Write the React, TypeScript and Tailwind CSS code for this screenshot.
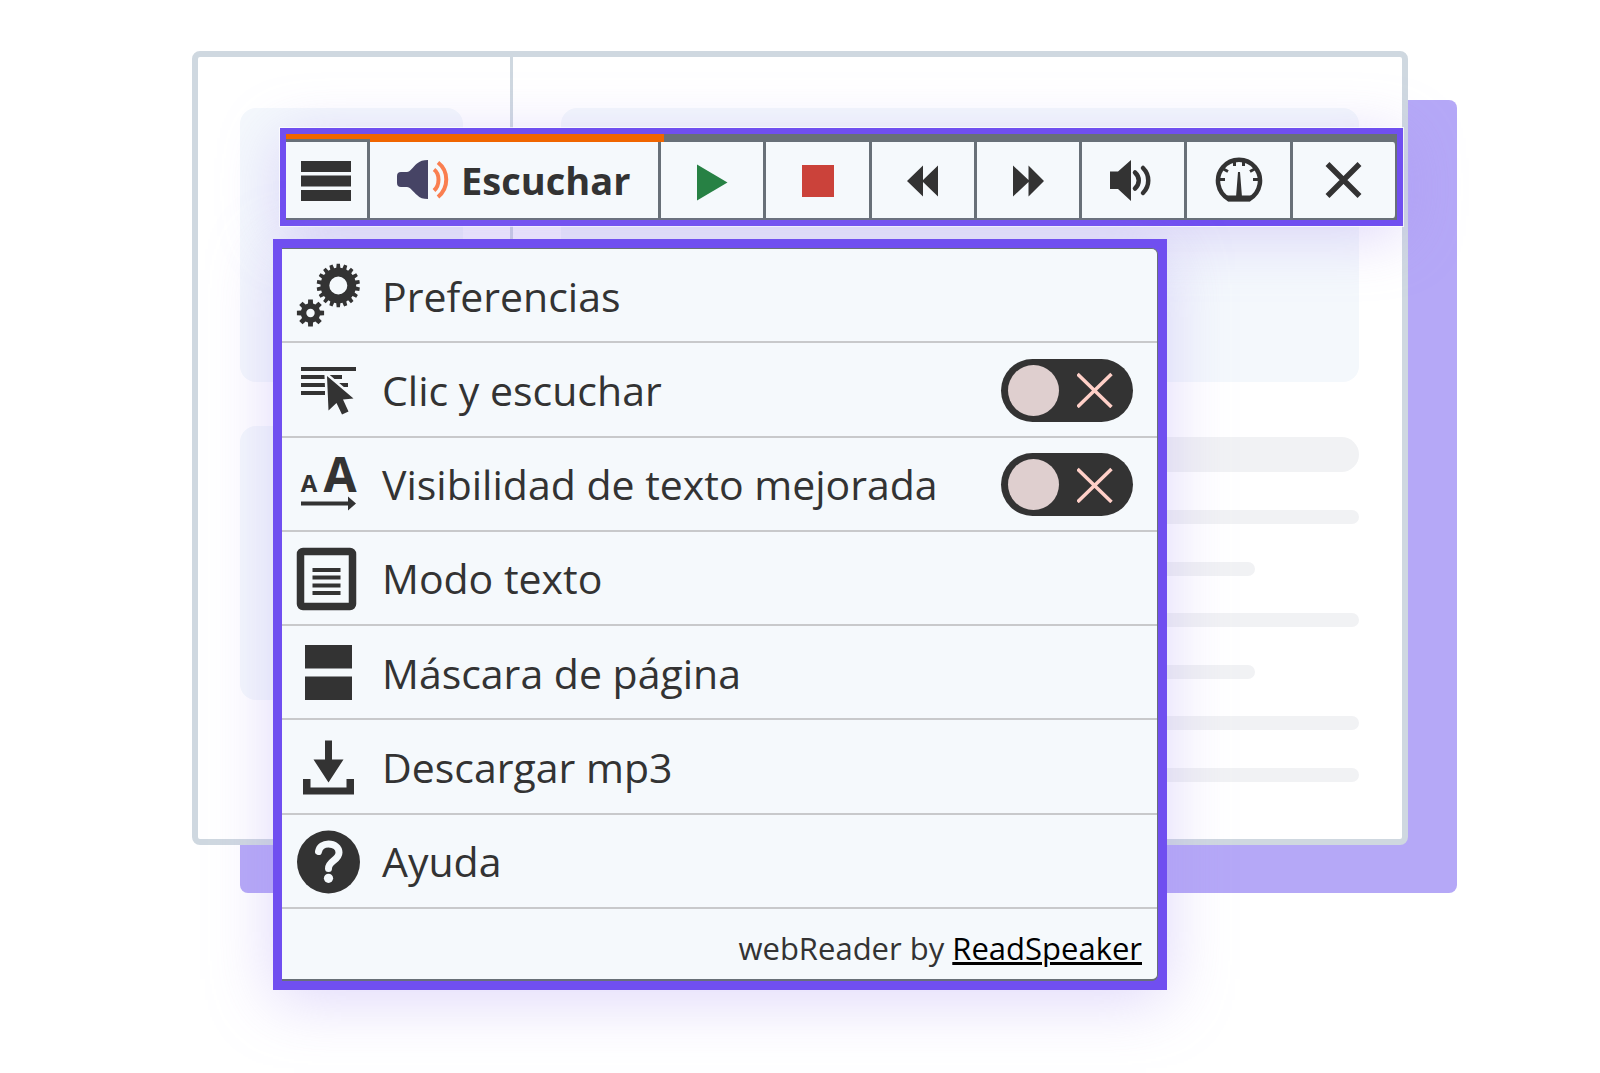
// =====================================
// App.tsx
// webReader: toolbar + tools menu over a page mockup
// =====================================

import { useState } from "react";
import type { ReactNode } from "react";

// Outline of a cog with `teeth` square teeth
function gearPath(
  cx: number,
  cy: number,
  outer: number,
  root: number,
  hole: number,
  teeth: number
) {
  const step = (Math.PI * 2) / teeth;
  const pts: string[] = [];
  for (let i = 0; i < teeth; i++) {
    const a = i * step - Math.PI / 2;
    const corners = [
      [root, -0.33],
      [outer, -0.22],
      [outer, 0.22],
      [root, 0.33],
    ];
    for (const [r, k] of corners) {
      const x = cx + r * Math.cos(a + k * step);
      const y = cy + r * Math.sin(a + k * step);
      pts.push(`${x.toFixed(2)} ${y.toFixed(2)}`);
    }
  }
  return (
    `M${pts.join("L")}Z` +
    `M${cx - hole} ${cy}a${hole} ${hole} 0 1 0 ${hole * 2} 0a${hole} ${hole} 0 1 0 ${-hole * 2} 0Z`
  );
}

function MenuIcon({ children }: { children: ReactNode }) {
  return (
    <svg
      viewBox="0 0 64 64"
      className="size-16 shrink-0 overflow-visible"
      fill="#333333"
      aria-hidden="true"
    >
      {children}
    </svg>
  );
}

const icons = {
  preferences: (
    <MenuIcon>
      <path fillRule="evenodd" d={gearPath(42.3, 21.5, 21.7, 17.8, 9, 18)} />
      <path fillRule="evenodd" d={gearPath(14.5, 49, 13.8, 9.8, 4.2, 8)} />
    </MenuIcon>
  ),
  click: (
    <MenuIcon>
      <path d="M5 9h55v4H5zM5 17h41v4H5zM5 25h47v4H5zM5 33h24v4H5z" />
      <path
        d="M31 18L57.5 40.5L47 41.5L52.5 53.5L46 56.5L40.5 45L32.5 52.5Z"
        stroke="#f5f9fc"
        strokeWidth="5"
      />
      <path d="M31 18L57.5 40.5L47 41.5L52.5 53.5L46 56.5L40.5 45L32.5 52.5Z" />
    </MenuIcon>
  ),
  visibility: (
    <MenuIcon>
      <g
        textAnchor="middle"
        fontWeight="700"
        fontFamily="'Open Sans', 'Liberation Sans', sans-serif"
      >
        <text x="13" y="39" fontSize="24">
          A
        </text>
        <text x="44" y="39" fontSize="48">
          A
        </text>
      </g>
      <path d="M5 48.500h48v4H5zM52 43.500L60 50.500L52 57.500Z" />
    </MenuIcon>
  ),
  text: (
    <MenuIcon>
      <rect
        x="4.5"
        y="4.5"
        width="52"
        height="55"
        rx="2.5"
        fill="none"
        stroke="#333333"
        strokeWidth="7.5"
      />
      <path d="M16.5 21h28v4h-28zM16.5 28.500h28v4h-28zM16.5 36.500h28v4h-28zM16.5 44h28v4h-28z" />
    </MenuIcon>
  ),
  mask: (
    <MenuIcon>
      <path d="M9 4h47v23.5H9zM9 35.5h47V59H9z" />
    </MenuIcon>
  ),
  download: (
    <MenuIcon>
      <path d="M29 4.500h7v19h11.5L32.5 46.500L17.5 23.500H29z" />
      <path d="M7 43h7.5v8.500h36V43H58v15.500H7z" />
    </MenuIcon>
  ),
  help: (
    <MenuIcon>
      <circle cx="32.5" cy="32" r="31.500" />
      <path
        d="M22.500 21.500C23.500 16.500 27.500 14 32.500 14C38.500 14 43 17.500 43 22.500C43 30.500 32.500 30.500 32.500 38.500"
        fill="none"
        stroke="#f5f9fc"
        strokeWidth="7"
        strokeLinecap="round"
      />
      <circle cx="32.5" cy="48.300" r="4.600" fill="#f5f9fc" />
    </MenuIcon>
  ),
};

const menuItems = [
  { id: "preferences", label: "Preferencias", icon: icons.preferences },
  { id: "click", label: "Clic y escuchar", icon: icons.click, toggle: true },
  {
    id: "visibility",
    label: "Visibilidad de texto mejorada",
    icon: icons.visibility,
    toggle: true,
  },
  { id: "text", label: "Modo texto", icon: icons.text },
  { id: "mask", label: "Máscara de página", icon: icons.mask },
  { id: "download", label: "Descargar mp3", icon: icons.download },
  { id: "help", label: "Ayuda", icon: icons.help },
];

const controls = [
  {
    label: "Reproducir",
    icon: (
      <svg viewBox="0 0 48 48" className="size-12" fill="#278144">
        <path d="M9 8.500L39.500 26.500L9 44.500Z" />
      </svg>
    ),
  },
  {
    label: "Detener",
    icon: (
      <svg viewBox="0 0 48 48" className="size-12" fill="#cb423a">
        <path d="M9 9h32v32H9z" />
      </svg>
    ),
  },
  {
    label: "Retroceder",
    icon: (
      <svg viewBox="0 0 48 48" className="size-12" fill="#333333">
        <path d="M8 25L24 9.500V24L39 9.500V40.500L24 26V40.500Z" />
      </svg>
    ),
  },
  {
    label: "Avanzar",
    icon: (
      <svg viewBox="0 0 48 48" className="size-12" fill="#333333">
        <path d="M40 25L24.500 9.500V24L9 9.500V40.500L24.500 26V40.500Z" />
      </svg>
    ),
  },
  {
    label: "Volumen",
    icon: (
      <svg viewBox="0 0 48 48" className="size-12" fill="#333333">
        <path d="M1 15.500h8L22 4V45L9 33H1z" />
        <path
          d="M26 16.500C31 21 31 28 26 32.500M34 12C41 19 41 30 34 37"
          fill="none"
          stroke="#333333"
          strokeWidth="4.500"
          strokeLinecap="round"
        />
      </svg>
    ),
  },
  {
    label: "Velocidad",
    icon: (
      <svg viewBox="0 0 48 48" className="size-12" fill="#333333">
        <path
          d="M13.500 43A21 21 0 1 1 34.500 43Z"
          fill="none"
          stroke="#333333"
          strokeWidth="4.500"
          strokeLinejoin="round"
        />
        <path d="M10 39.500h28L35 45.500H13zM23 16h2L27 41H21z" />
        <path
          d="M4 23.500h6M38 23.500h6M7.500 12.500l5.500 3M40.500 12.500l-5.500 3M19.500 4v6M28.500 4v6"
          stroke="#333333"
          strokeWidth="3"
        />
      </svg>
    ),
  },
  {
    label: "Cerrar",
    icon: (
      <svg viewBox="0 0 48 48" className="size-12">
        <path d="M7.500 8L39.500 40M39.500 8L7.500 40" stroke="#333333" strokeWidth="5.500" />
      </svg>
    ),
  },
];

function Toggle({
  id,
  checked,
  onChange,
}: {
  id: string;
  checked: boolean;
  onChange: () => void;
}) {
  return (
    <span className="relative flex h-[63px] w-[132px] shrink-0 items-center justify-between rounded-full bg-[#333333] pr-5 pl-[7px]">
      <input
        id={id}
        type="checkbox"
        role="switch"
        checked={checked}
        onChange={onChange}
        className="absolute inset-0 cursor-pointer appearance-none rounded-full"
      />
      <span className="size-[51px] rounded-full bg-[#dfcfcf]" />
      <svg viewBox="0 0 36 36" className="size-9" aria-hidden="true">
        <path
          d="M.5 2L34.500 35M34.500 2L.5 35"
          stroke="#ffd0c8"
          strokeWidth="3.500"
        />
      </svg>
    </span>
  );
}

function PageMockup() {
  return (
    <div className="relative flex rounded-lg border-[6px] border-[#cfd8e0] bg-white">
      <div className="w-[315px] shrink-0 space-y-11 border-r-[3px] border-[#cfd8e0] pt-[51px] pr-[47px] pl-[42px]">
        <div className="h-[274px] rounded-2xl bg-[#f4f8fc]" />
        <div className="h-[274px] rounded-2xl bg-[#f4f8fc]" />
      </div>
      <div className="flex-1 pt-[51px] pr-[43px] pb-[57px] pl-12">
        <div className="h-[274px] rounded-2xl bg-[#f4f8fc]" />
        <div className="mt-[55px] h-[35px] rounded-full bg-[#f1f2f4]" />
        <div className="mt-[38px] flex h-[272px] flex-col justify-between">
          <div className="h-3.5 rounded-full bg-[#f1f2f4]" />
          <div className="h-3.5 w-[87%] rounded-full bg-[#f1f2f4]" />
          <div className="h-3.5 rounded-full bg-[#f1f2f4]" />
          <div className="h-3.5 w-[87%] rounded-full bg-[#f1f2f4]" />
          <div className="h-3.5 rounded-full bg-[#f1f2f4]" />
          <div className="h-3.5 rounded-full bg-[#f1f2f4]" />
        </div>
      </div>
    </div>
  );
}

function Toolbar() {
  return (
    <div className="ml-[7px] border-[6px] border-[#704ff0] bg-[#687078] shadow-[0_0_0_1px_rgba(255,255,255,0.7),0_10px_60px_rgba(165,145,242,0.36)]">
      <div className="h-2">
        <div className="h-full w-[34%] bg-[#f06500]" />
      </div>
      <div className="flex h-[78px] border-b-2 border-[#687078]">
        <button
          type="button"
          aria-label="Menú"
          className="-mt-[3px] flex w-[84px] shrink-0 items-center border-t-[3px] border-r-[3px] border-[#687078] bg-[#f5f9fc] pt-0.5 pl-3.5"
        >
          <svg viewBox="0 0 52 40" className="h-10 w-[52px]" fill="#333333">
            <path d="M1 0h50v11H1zM1 14.500h50v11H1zM1 29h50v11H1z" />
          </svg>
        </button>
        <button
          type="button"
          className="flex w-[291px] shrink-0 items-center gap-3 border-r-[3px] border-[#687078] bg-[#f5f9fc] pl-[27px] text-[38px] font-bold"
        >
          <svg viewBox="0 0 52 40" className="h-10 w-[52px]" aria-hidden="true">
            <path
              d="M4 12H10C13 12 16 7 20 3.500C23 1 26 0 31 0V39C26 39 23 38 20 35C16 31.500 13 27 10 27H4Q0 27 0 23V16Q0 12 4 12Z"
              fill="#464465"
            />
            <path
              d="M37 9.500C43 14 43 25 37 30.500M41 2.500C52 11 52 28 41 37"
              fill="none"
              stroke="#fa7f50"
              strokeWidth="4"
            />
          </svg>
          Escuchar
        </button>
        {controls.map((c) => (
          <button
            key={c.label}
            type="button"
            aria-label={c.label}
            className="flex flex-1 items-center justify-center border-r-[3px] border-[#687078] bg-[#f5f9fc] last:rounded-r last:border-r-2"
          >
            {c.icon}
          </button>
        ))}
      </div>
    </div>
  );
}

function ToolsMenu() {
  const [enabled, setEnabled] = useState<Record<string, boolean>>({});

  const rowClass =
    "flex w-full items-center gap-[22px] pt-0.5 pr-6 pl-3.5 text-left";

  return (
    <div className="w-[894px] max-w-full border-[9px] border-[#704ff0] bg-[#704ff0] shadow-[0_10px_60px_rgba(165,145,242,0.36)]">
      <div className="rounded-r-md border-t border-r border-b-2 border-[#687078] bg-[#f5f9fc]">
        <ul className="grid min-h-[660px] auto-rows-fr text-[41px] leading-none">
          {menuItems.map((item) => (
            <li key={item.id} className="flex border-b-2 border-[#c8c9cb]">
              {item.toggle ? (
                <div className={rowClass}>
                  {item.icon}
                  <label htmlFor={item.id} className="flex-1 cursor-pointer">
                    {item.label}
                  </label>
                  <Toggle
                    id={item.id}
                    checked={!!enabled[item.id]}
                    onChange={() =>
                      setEnabled({ ...enabled, [item.id]: !enabled[item.id] })
                    }
                  />
                </div>
              ) : (
                <button type="button" className={rowClass}>
                  {item.icon}
                  {item.label}
                </button>
              )}
            </li>
          ))}
        </ul>
        <p className="pt-[17px] pr-[15px] pb-2 text-right text-[31px] leading-[45px]">
          webReader by{" "}
          <a href="#readspeaker" className="text-black underline">
            ReadSpeaker
          </a>
        </p>
      </div>
    </div>
  );
}

export default function App() {
  return (
    <main className="min-h-screen overflow-hidden bg-white px-[12%] pt-[51px] font-['Open_Sans','Noto_Sans',sans-serif] text-[#333333]">
      <div className="relative">
        <div className="absolute top-[49px] -right-[49px] -bottom-12 left-12 rounded-lg bg-[#b5a8f7]" />
        <PageMockup />
        <div className="absolute top-[77px] right-[5px] left-[81px] space-y-[13px]">
          <Toolbar />
          <ToolsMenu />
        </div>
      </div>
    </main>
  );
}
